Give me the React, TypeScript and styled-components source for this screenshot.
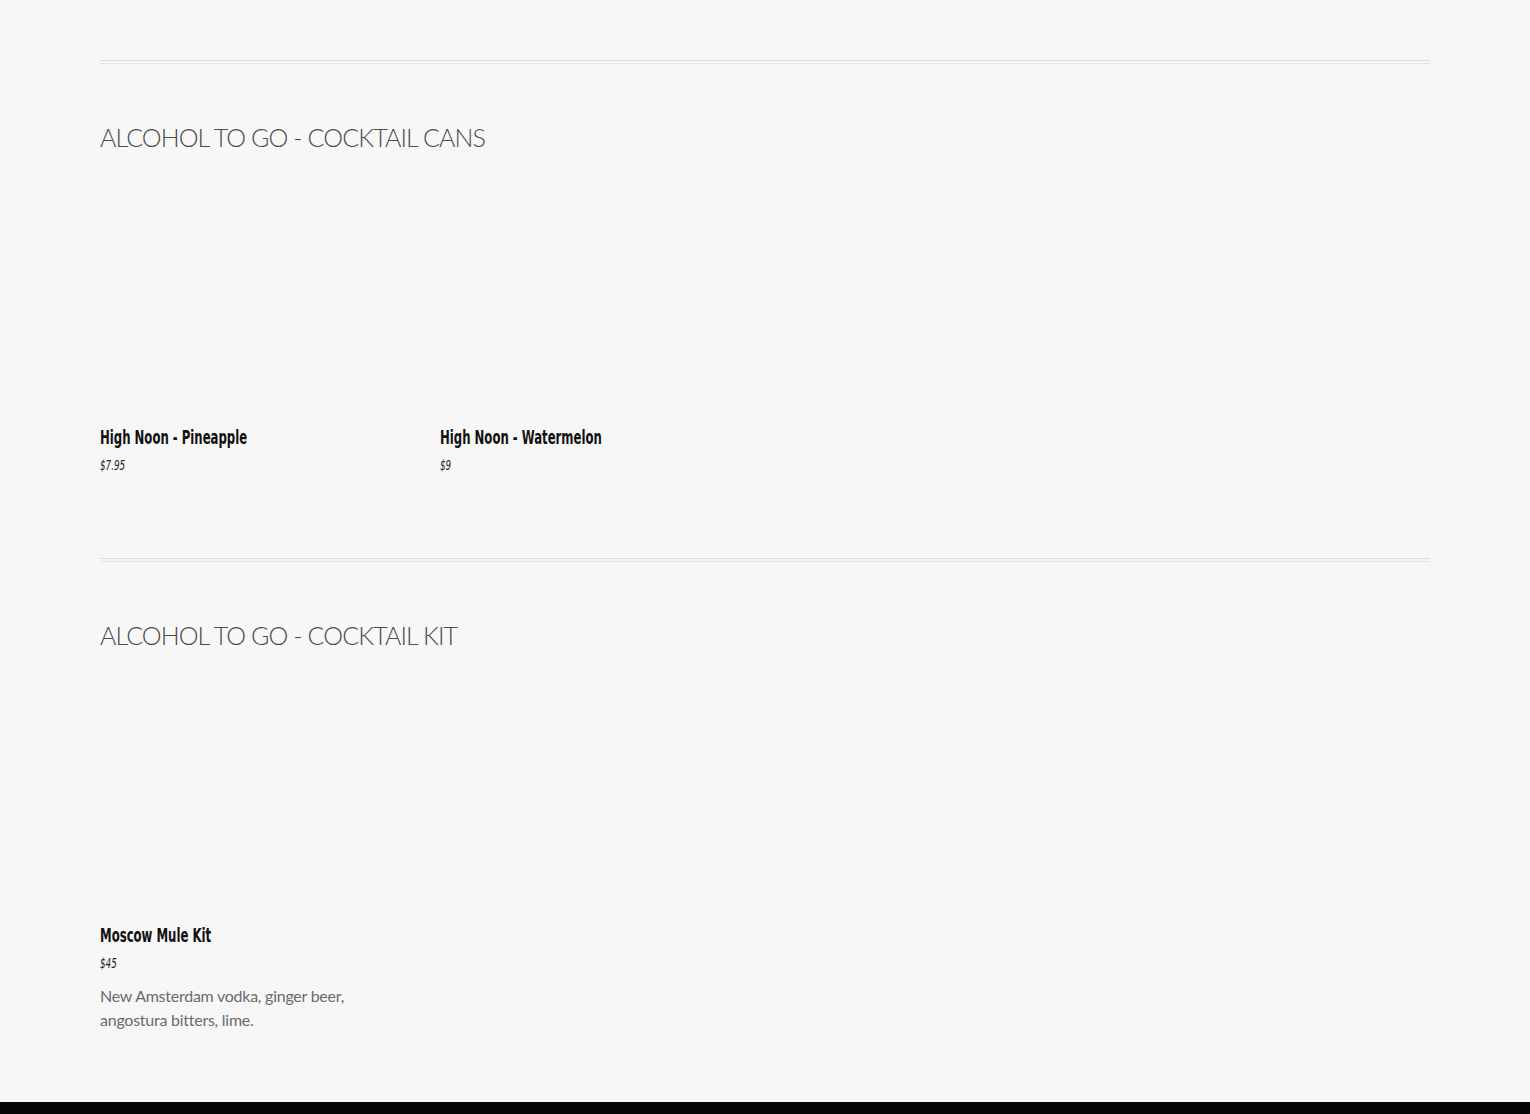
import React from "react";
import styled, { createGlobalStyle } from "styled-components";

const GlobalStyle = createGlobalStyle`
  html, body {
    margin: 0;
    padding: 0;
    background: #f7f7f7;
  }
  * {
    box-sizing: border-box;
  }
`;

const Page = styled.main`
  padding: 60px 100px 0;
`;

const Section = styled.section`
  padding-bottom: 70px;

  & + & {
    margin-top: 14px;
  }
`;

const Divider = styled.hr`
  margin: 0;
  height: 4px;
  border: 0;
  border-top: 1px solid #dcdcdc;
  border-bottom: 1px solid #e4e4e4;
`;

const Heading = styled.h2`
  margin: 58px 0 0;
  font-family: "Lato", "Noto Sans", sans-serif;
  font-weight: 300;
  font-size: 25px;
  line-height: 30px;
  letter-spacing: -0.9px;
  color: #4d4d4d;
  text-transform: uppercase;
`;

const Grid = styled.div`
  display: grid;
  grid-template-columns: repeat(4, 310px);
  column-gap: 30px;
  margin-top: 33px;
`;

const Card = styled.article`
  display: flex;
  flex-direction: column;
  align-items: flex-start;
`;

const Picture = styled.div`
  align-self: stretch;
  height: 240px;
`;

const Name = styled.h3`
  margin: 0;
  font-family: "DejaVu Sans Condensed", "DejaVu Sans", sans-serif;
  font-weight: 700;
  font-size: 20px;
  line-height: 24px;
  color: #111;
  white-space: nowrap;
  transform: scaleX(0.65);
  transform-origin: left center;
`;

const Price = styled.div`
  margin-top: 7px;
  font-family: "DejaVu Sans Condensed", "DejaVu Sans", sans-serif;
  font-style: italic;
  font-size: 14px;
  line-height: 18px;
  color: #222;
  transform: scaleX(0.7);
  transform-origin: left center;
`;

const Description = styled.p`
  margin: 12px 0 0;
  font-family: "Lato", "Noto Sans", sans-serif;
  font-size: 16px;
  line-height: 24px;
  letter-spacing: -0.25px;
  color: #6b6b6b;
  max-width: 260px;
`;

const Footer = styled.footer`
  height: 60px;
  background: #050505;
`;

type Item = {
  name: string;
  price: string;
  desc?: string;
};

const sections: { title: string; items: Item[] }[] = [
  {
    title: "Alcohol To Go - Cocktail Cans",
    items: [
      { name: "High Noon - Pineapple", price: "$7.95" },
      { name: "High Noon - Watermelon", price: "$9" },
    ],
  },
  {
    title: "Alcohol To Go - Cocktail Kit",
    items: [
      {
        name: "Moscow Mule Kit",
        price: "$45",
        desc: "New Amsterdam vodka, ginger beer, angostura bitters, lime.",
      },
    ],
  },
];

export default function App() {
  return (
    <>
      <GlobalStyle />
      <Page>
        {sections.map((s) => (
          <Section key={s.title}>
            <Divider />
            <Heading>{s.title}</Heading>
            <Grid>
              {s.items.map((item) => (
                <Card key={item.name}>
                  <Picture />
                  <Name>{item.name}</Name>
                  <Price>{item.price}</Price>
                  {item.desc ? <Description>{item.desc}</Description> : null}
                </Card>
              ))}
            </Grid>
          </Section>
        ))}
      </Page>
      <Footer />
    </>
  );
}
